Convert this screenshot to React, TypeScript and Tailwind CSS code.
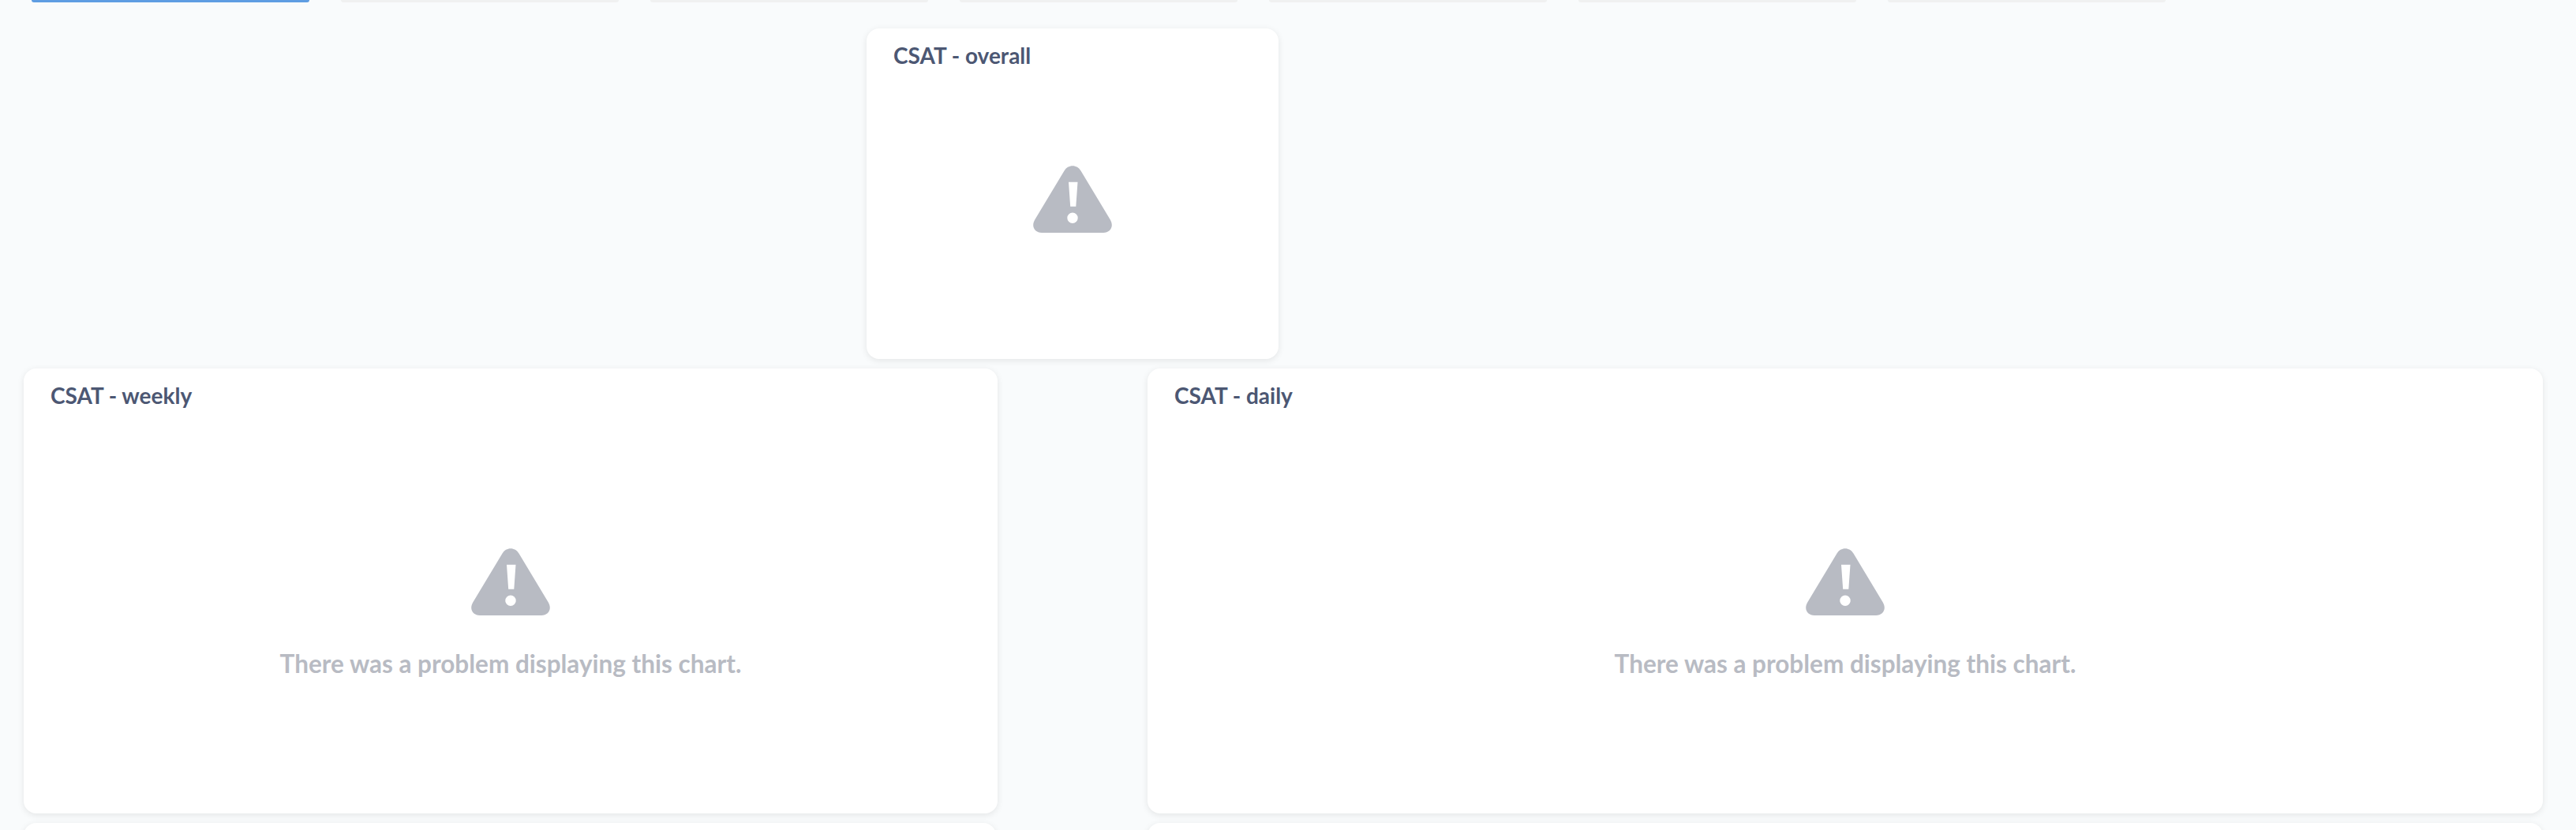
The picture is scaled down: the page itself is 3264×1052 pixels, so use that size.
import React from "react";

const tabs = [0, 1, 2, 3, 4, 5, 6];

const WarningIcon = () => (
  <svg viewBox="0 0 100 85" className="w-[100px] h-[85px] shrink-0 text-[#b8bbc3]">
    <path
      fill="currentColor"
      fillRule="evenodd"
      d="M39.5 6.5C44-2 56-2 60.5 6.5L97.5 68C103 77 98 85 89 85H11C2 85-3 77 2.5 68ZM45 20.7H56.5L54.3 51.7H47.2ZM50 59.5A6.7 6.7 0 1 0 50 72.9A6.7 6.7 0 1 0 50 59.5Z"
    />
  </svg>
);

const ChartCard = ({
  title,
  className,
  bodyClass,
  error,
}: {
  title: string;
  className: string;
  bodyClass?: string;
  error?: boolean;
}) => (
  <div className={`${className} flex flex-col shrink-0 bg-white rounded-[16px] shadow-[0_2px_8px_rgba(0,0,0,0.09)]`}>
    <div className="h-[60px] pl-[34px] pt-[16px] text-[28px] leading-[36px] font-bold text-[#4c5773]">{title}</div>
    <div className={`flex-1 flex flex-col items-center justify-center ${bodyClass ?? ""}`}>
      <WarningIcon />
      {error && (
        <div className="mt-[41px] text-[31.5px] leading-[40px] font-bold text-[#b8bbc3]">
          There was a problem displaying this chart.
        </div>
      )}
    </div>
  </div>
);

export default function App() {
  return (
    <div className="h-[1052px] overflow-hidden bg-[#f9fbfc] font-['Lato',sans-serif]">
      {/* Tabs, cut off by the top of the page */}
      <div className="flex gap-[40px] pl-[40px] h-[3px]">
        {tabs.map((t) => (
          <div
            key={t}
            className={`w-[352px] rounded-b-[8px] ${t === 0 ? "bg-[#5f9de2]" : "bg-[#f0f1f1]"}`}
          />
        ))}
      </div>

      <div className="flex mt-[33px] pl-[1098px]">
        <ChartCard title="CSAT - overall" className="w-[522px] h-[419px]" bodyClass="pb-[46px]" />
      </div>

      <div className="flex gap-[190px] mt-[12px] pl-[30px]">
        <ChartCard title="CSAT - weekly" className="w-[1234px] h-[564px]" bodyClass="pb-[3px]" error />
        <ChartCard title="CSAT - daily" className="w-[1768px] h-[564px]" bodyClass="pb-[3px]" error />
      </div>

      <div className="flex gap-[192px] mt-[12px] pl-[30px]">
        <div className="w-[1232px] h-[300px] shrink-0 bg-white rounded-[16px] shadow-[0_2px_8px_rgba(0,0,0,0.09)]" />
        <div className="w-[1768px] h-[300px] shrink-0 bg-white rounded-[16px] shadow-[0_2px_8px_rgba(0,0,0,0.09)]" />
      </div>
    </div>
  );
}
